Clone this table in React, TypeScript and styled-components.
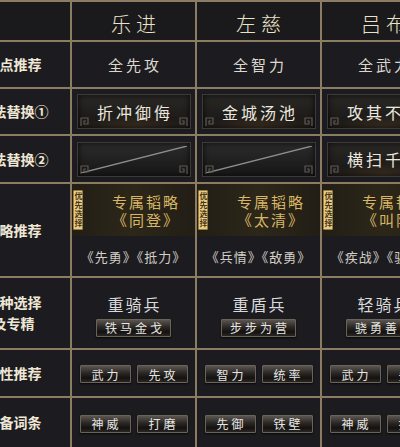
import React from 'react';
import styled, { createGlobalStyle } from 'styled-components';

const GlobalStyle = createGlobalStyle`
  body {
    margin: 0;
    background: #17171a;
    overflow: hidden;
  }
`;

const cjk = `"Noto Sans CJK SC", "Noto Sans", sans-serif`;

type Hero = {
  name: string;
  points: string;
  tactic1: string;
  tactic2: string;
  strategy: string;
  extras: string;
  troop: string;
  troopSkill: string;
  attrs: [string, string];
  gear: [string, string];
};

const heroes: Hero[] = [
  {
    name: '乐进',
    points: '全先攻',
    tactic1: '折冲御侮',
    tactic2: '',
    strategy: '《同登》',
    extras: '《先勇》《抵力》',
    troop: '重骑兵',
    troopSkill: '铁马金戈',
    attrs: ['武力', '先攻'],
    gear: ['神威', '打磨'],
  },
  {
    name: '左慈',
    points: '全智力',
    tactic1: '金城汤池',
    tactic2: '',
    strategy: '《太清》',
    extras: '《兵情》《敌勇》',
    troop: '重盾兵',
    troopSkill: '步步为营',
    attrs: ['智力', '统率'],
    gear: ['先御', '铁壁'],
  },
  {
    name: '吕布',
    points: '全武力',
    tactic1: '攻其不备',
    tactic2: '横扫千军',
    strategy: '《叫阵》',
    extras: '《疾战》《骁勇》',
    troop: '轻骑兵',
    troopSkill: '骁勇善战',
    attrs: ['武力', '先攻'],
    gear: ['神威', '打磨'],
  },
];

const Viewport = styled.div`
  width: 400px;
  height: 447px;
  overflow: hidden;
  background: #17171a;
`;

const Table = styled.div`
  display: grid;
  grid-template-columns: 113px repeat(3, 123px);
  grid-template-rows: 38px 45px 45px 46px 92px 70px 46px 49px;
  gap: 2px;
  padding-top: 2px;
  margin-left: -43px;
  width: max-content;
  background: #8b7c62;
  font-family: ${cjk};
`;

const Cell = styled.div`
  background: #1c1c20;
  display: flex;
  align-items: center;
  justify-content: center;
  overflow: hidden;
`;

const Label = styled(Cell)`
  color: #efe7d6;
  font-weight: 700;
  font-size: 14px;
  line-height: 21px;
  text-align: center;
  white-space: pre-line;
`;

const HeaderCell = styled(Cell)`
  background: #1a1a1d;
  padding-top: 4px;
  box-sizing: border-box;
  color: #ece2c8;
  font-size: 20px;
  font-weight: 300;
  letter-spacing: 5px;
  text-indent: 5px;
`;

const PlainText = styled.span`
  color: #dcd8cf;
  font-size: 15px;
  letter-spacing: 3px;
  margin-right: -3px;
`;

const Slot = styled.div`
  position: relative;
  width: 114px;
  height: 35px;
  box-sizing: border-box;
  border: 1px solid #3d3b37;
  background:
    radial-gradient(ellipse 60% 60% at 50% 100%, rgba(110, 80, 45, 0.35), transparent 70%),
    linear-gradient(#2b2926, #1d1b19 70%, #221f1b);
  box-shadow: inset 0 0 6px rgba(0, 0, 0, 0.8);
  display: flex;
  align-items: center;
  justify-content: center;
  color: #ebe7df;
  font-size: 16px;
  letter-spacing: 3px;
  text-indent: 3px;
`;

const EmptySlot = styled(Slot)`
  background: linear-gradient(#2c2c2d, #1a1a1b 80%);
`;

const Diagonal = styled.svg`
  position: absolute;
  inset: 3px;
  width: calc(100% - 6px);
  height: calc(100% - 6px);
`;

const Corner = styled.svg<{ $right?: boolean }>`
  position: absolute;
  bottom: 2px;
  ${(p) => (p.$right ? 'right: 2px; transform: scaleX(-1);' : 'left: 2px;')}
  width: 9px;
  height: 9px;
`;

const StrategyCell = styled(Cell)`
  flex-direction: column;
  align-items: stretch;
`;

const StrategyTop = styled.div`
  height: 52px;
  display: flex;
  align-items: center;
  background: linear-gradient(90deg, #221e16, #2d2719 50%, #221e16);
`;

const Badge = styled.div`
  width: 10px;
  height: 40px;
  margin-left: 1px;
  box-sizing: border-box;
  background: #e5cd8a;
  border: 1px solid #9b7b3c;
  border-radius: 1px;
  color: #4a3510;
  font-size: 8px;
  line-height: 8px;
  writing-mode: vertical-rl;
  display: flex;
  align-items: center;
  justify-content: center;
  letter-spacing: 1px;
  font-weight: 700;
`;

const StrategyText = styled.div`
  flex: 1;
  padding-left: 14px;
  display: flex;
  flex-direction: column;
  align-items: center;
  gap: 1px;
  color: #d8b665;
  font-size: 15px;
  line-height: 17px;
  letter-spacing: 2px;
`;

const StrategyBottom = styled.div`
  flex: 1;
  display: flex;
  align-items: center;
  justify-content: center;
  color: #d3cfc6;
  font-size: 13px;
  letter-spacing: 1px;
  white-space: nowrap;
`;

const TroopCell = styled(Cell)`
  flex-direction: column;
  gap: 3px;
  padding-top: 2px;
  box-sizing: border-box;
`;

const TroopName = styled.span`
  color: #dadada;
  font-size: 16px;
  letter-spacing: 2px;
  margin-right: -2px;
`;

const Chip = styled.div<{ $wide?: boolean }>`
  width: ${(p) => (p.$wide ? 75 : 51)}px;
  height: 18px;
  box-sizing: border-box;
  border: 1px solid #6a635a;
  border-radius: 1px;
  background: linear-gradient(#5a554f, #2a2623 45%, #141211 75%, #2a2622);
  box-shadow: 0 1px 2px rgba(0, 0, 0, 0.7);
  display: flex;
  align-items: center;
  justify-content: center;
  color: #e6e6e4;
  font-size: 12px;
  letter-spacing: 3px;
  text-indent: 3px;
  white-space: nowrap;
`;

const ChipRow = styled(Cell)`
  gap: 6px;
  padding-top: 2px;
  box-sizing: border-box;
`;

const CornerMark = ({ right }: { right?: boolean }) => (
  <Corner $right={right} viewBox="0 0 9 9">
    <path d="M1 9 V1 H8 V7 H4 V4 H6" fill="none" stroke="#5e5850" strokeWidth="1.2" />
  </Corner>
);

const SlotBox = ({ text }: { text: string }) =>
  text ? (
    <Slot>
      {text}
      <CornerMark />
      <CornerMark right />
    </Slot>
  ) : (
    <EmptySlot>
      <Diagonal viewBox="0 0 100 25" preserveAspectRatio="none">
        <line x1="0" y1="25" x2="100" y2="0" stroke="#8e8e8e" strokeWidth="1.3" vectorEffect="non-scaling-stroke" />
      </Diagonal>
      <CornerMark />
      <CornerMark right />
    </EmptySlot>
  );

export default function App() {
  return (
    <Viewport>
      <GlobalStyle />
      <Table>
        <HeaderCell />
        {heroes.map((h) => (
          <HeaderCell key={h.name}>{h.name}</HeaderCell>
        ))}

        <Label>加点推荐</Label>
        {heroes.map((h) => (
          <Cell key={h.name}>
            <PlainText>{h.points}</PlainText>
          </Cell>
        ))}

        <Label>战法替换①</Label>
        {heroes.map((h) => (
          <Cell key={h.name}>
            <SlotBox text={h.tactic1} />
          </Cell>
        ))}

        <Label>战法替换②</Label>
        {heroes.map((h) => (
          <Cell key={h.name}>
            <SlotBox text={h.tactic2} />
          </Cell>
        ))}

        <Label>韬略推荐</Label>
        {heroes.map((h) => (
          <StrategyCell key={h.name}>
            <StrategyTop>
              <Badge>优先选择</Badge>
              <StrategyText>
                <span>专属韬略</span>
                <span>{h.strategy}</span>
              </StrategyText>
            </StrategyTop>
            <StrategyBottom>{h.extras}</StrategyBottom>
          </StrategyCell>
        ))}

        <Label>{'兵种选择\n及专精'}</Label>
        {heroes.map((h) => (
          <TroopCell key={h.name}>
            <TroopName>{h.troop}</TroopName>
            <Chip $wide>{h.troopSkill}</Chip>
          </TroopCell>
        ))}

        <Label>属性推荐</Label>
        {heroes.map((h) => (
          <ChipRow key={h.name}>
            {h.attrs.map((a, i) => (
              <Chip key={i}>{a}</Chip>
            ))}
          </ChipRow>
        ))}

        <Label>装备词条</Label>
        {heroes.map((h) => (
          <ChipRow key={h.name}>
            {h.gear.map((g, i) => (
              <Chip key={i}>{g}</Chip>
            ))}
          </ChipRow>
        ))}
      </Table>
    </Viewport>
  );
}
